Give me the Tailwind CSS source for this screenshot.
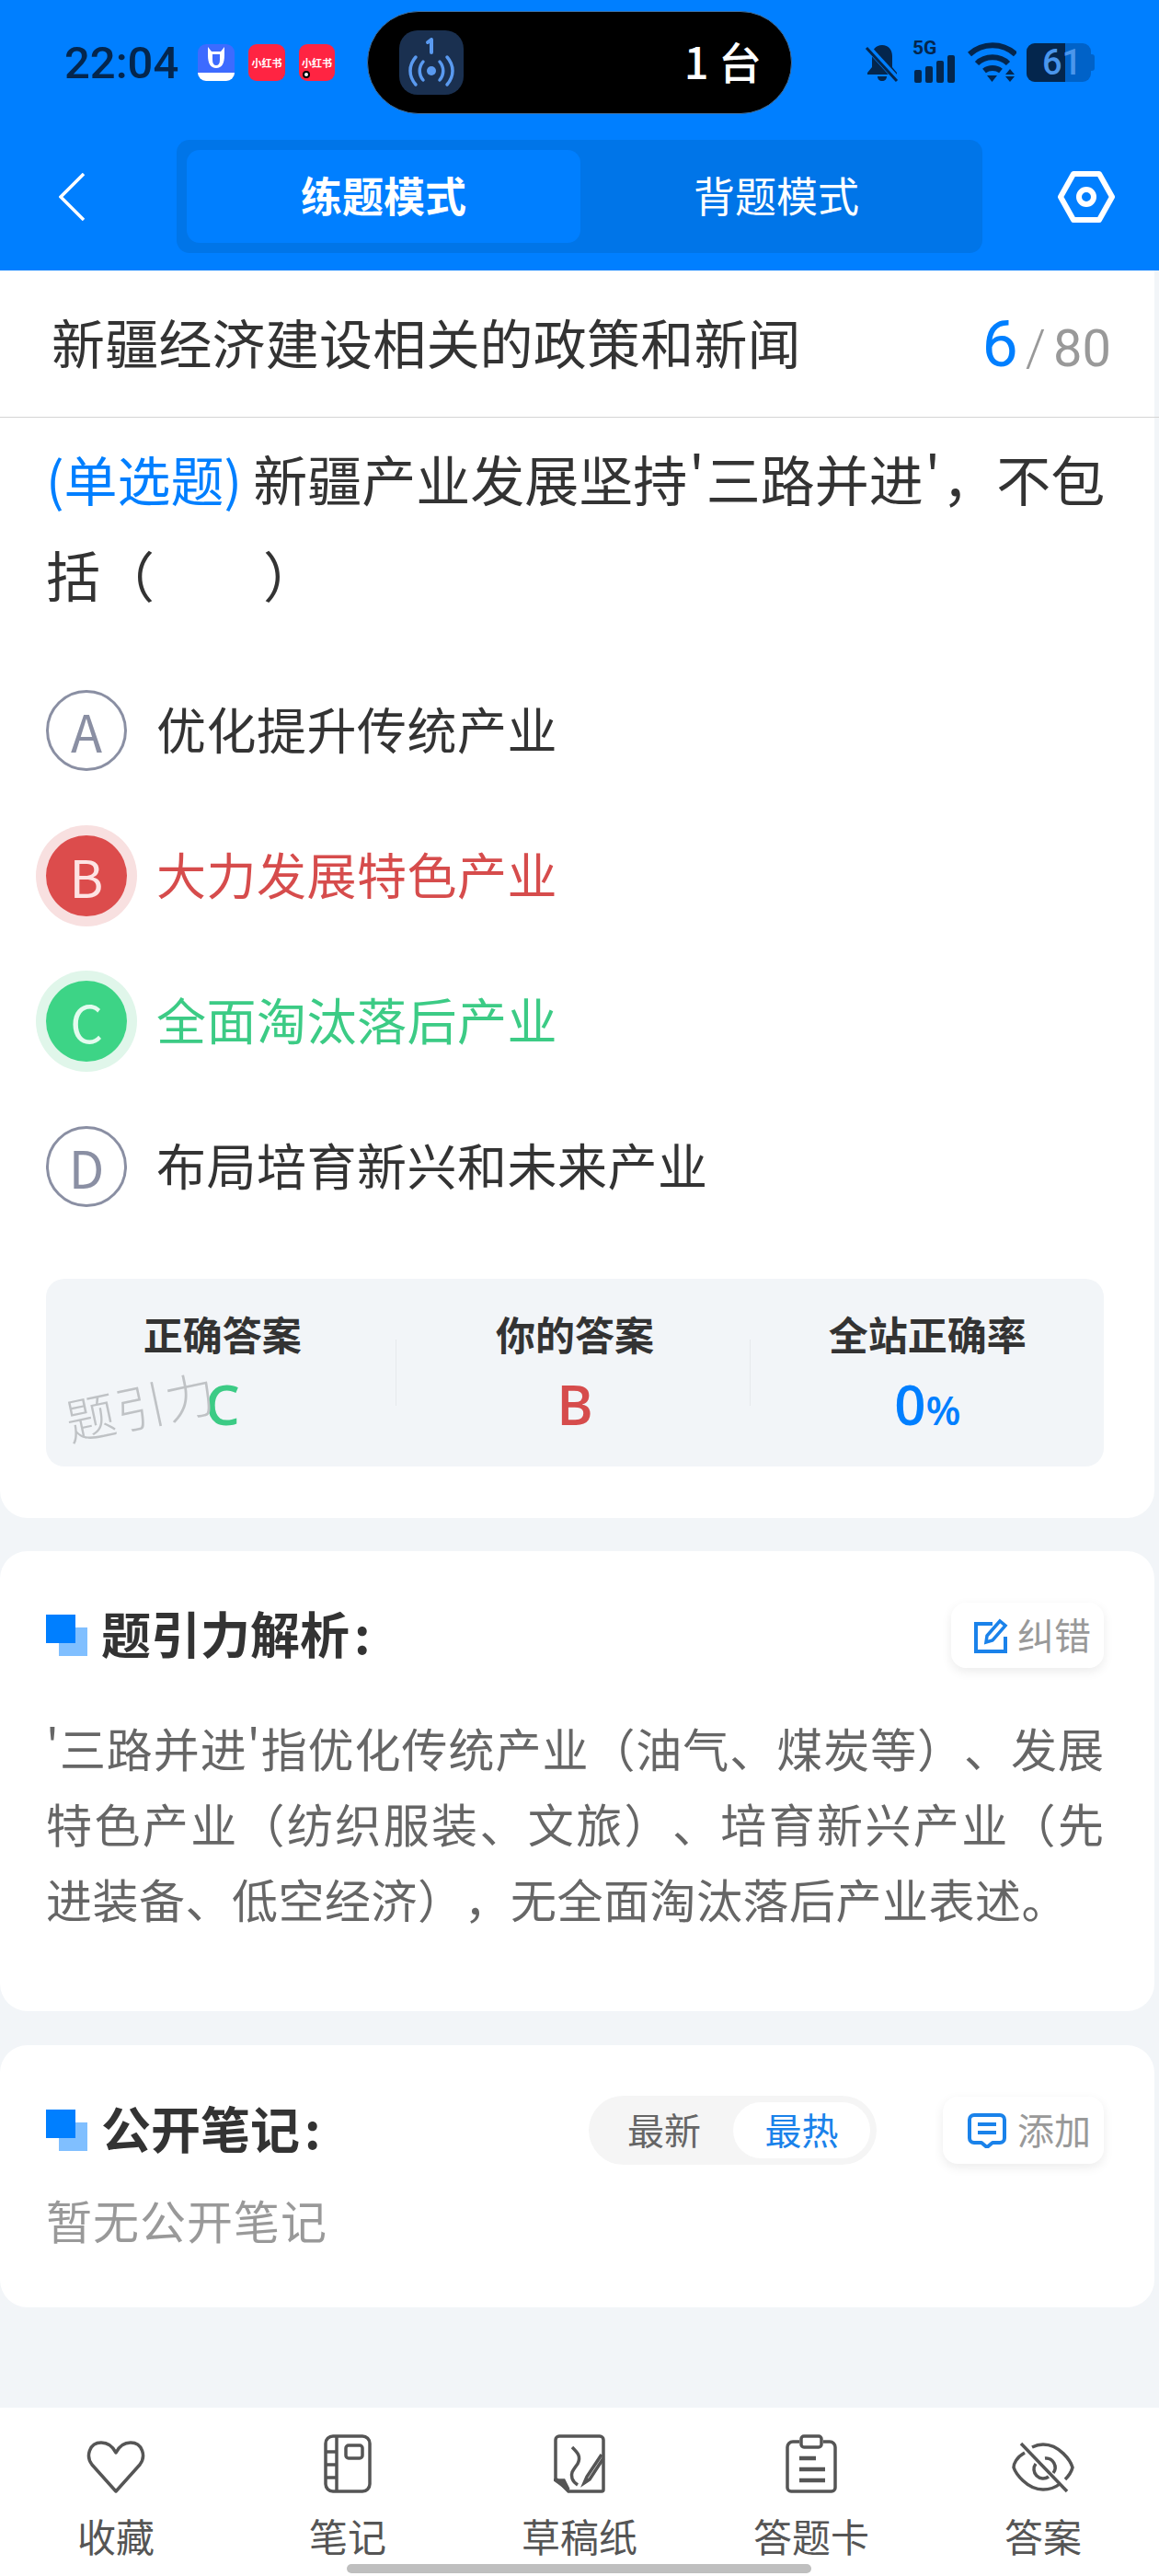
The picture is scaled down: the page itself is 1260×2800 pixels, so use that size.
<!DOCTYPE html>
<html lang="zh-CN">
<head>
    <meta charset="UTF-8">
    <meta name="viewport" content="width=device-width, initial-scale=1.0">
    <title>练题模式</title>
    <script src="https://cdn.jsdelivr.net/npm/@tailwindcss/browser@4"></script>
</head>
<body class="bg-[#f2f5f8]">
    <div class="relative w-[1260px] h-[2800px] flex flex-col overflow-hidden font-['Noto_Sans_CJK_SC','Noto_Sans',sans-serif] text-[#333333]">

        <!-- header -->
        <header class="h-[294px] shrink-0 bg-[#007fff]">
            <div class="h-[136px] pt-[12px] flex items-start">
                <div class="h-[112px] flex items-center pl-[70px] w-[399px] shrink-0">
                    <span class="w-[125px] font-['Roboto',sans-serif] text-[49px] font-medium text-[#04264d] leading-none">22:04</span>
                    <div class="ml-[20px] w-[40px] h-[40px] rounded-[9px] bg-[#3d6bff] overflow-hidden flex flex-col items-center">
                        <svg viewBox="0 0 40 31" class="w-[40px] h-[31px] shrink-0"><path d="M11 3l4 5h10l4-5v9c0 9-3 14-9 14s-9-5-9-14z" fill="#fff"/><path d="M16 11h8v6c0 4-1.5 6-4 6s-4-2-4-6z" fill="#3d6bff"/></svg>
                        <div class="w-[40px] flex-1 bg-white"></div>
                    </div>
                    <div class="ml-[15px] w-[40px] h-[40px] rounded-[9px] bg-[#ff2442] flex items-center justify-center text-white text-[11px] font-bold leading-none whitespace-nowrap">小红书</div>
                    <div class="ml-[15px] relative w-[39px] h-[40px] rounded-[9px] bg-[#ff2442] flex items-center justify-center text-white text-[11px] font-bold leading-none whitespace-nowrap">小红书
                        <span class="absolute left-[4px] bottom-[3px] w-[8px] h-[8px] rounded-full bg-white border-[2px] border-black"></span>
                    </div>
                </div>
                <div class="w-[462px] h-[112px] shrink-0 rounded-full bg-black border border-[#3f6f9f] flex items-center justify-between pl-[34px] pr-[32px]">
                    <div class="w-[70px] h-[70px] rounded-[20px] bg-[#1a3050] flex items-center justify-center">
                        <svg viewBox="0 0 70 70" class="w-[70px] h-[70px]" fill="none" stroke="#5a9af0" stroke-width="3.5" stroke-linecap="round">
                            <path d="M35 10v14M31 13l4-3" stroke-width="4"/>
                            <circle cx="35" cy="44" r="5" fill="#5a9af0" stroke="none"/>
                            <path d="M26 34c-5 6-5 14 0 20M44 34c5 6 5 14 0 20"/>
                            <path d="M18 29c-8 9-8 21 0 30M52 29c8 9 8 21 0 30"/>
                        </svg>
                    </div>
                    <span class="pb-[6px] text-white text-[47px] font-medium leading-none">1 台</span>
                </div>
                <div class="h-[112px] flex items-center pl-[78px]">
                    <svg viewBox="0 0 40 42" class="w-[40px] h-[42px]" fill="#04264d">
                        <path d="M20 2c7 0 11 5 11 12v12l5 6v2H4v-2l5-6V14c0-7 4-12 11-12z"/>
                        <path d="M15 36h10c0 3-2 5-5 5s-5-2-5-5z"/>
                        <path d="M3 3l34 37" stroke="#007fff" stroke-width="7"/>
                        <path d="M3 5l33 36" stroke="#04264d" stroke-width="3"/>
                    </svg>
                    <div class="relative ml-[13px] w-[46px] h-[44px]">
                        <span class="absolute left-0 top-[-4px] text-[21px] font-bold text-[#04264d] leading-none font-['Roboto',sans-serif]">5G</span>
                        <svg viewBox="0 0 46 44" class="w-[46px] h-[44px]" fill="#04264d">
                            <rect x="2" y="30" width="8" height="14" rx="2"/><rect x="14" y="26" width="8" height="18" rx="2"/><rect x="26" y="20" width="8" height="24" rx="2"/><rect x="38" y="14" width="8" height="30" rx="2"/>
                        </svg>
                    </div>
                    <svg viewBox="0 0 53 44" class="ml-[14px] w-[53px] h-[44px]" fill="none" stroke="#04264d" stroke-width="6">
                        <path d="M2 13c14-13 36-13 50 0"/><path d="M10 23c9-9 25-9 34 0"/><path d="M18 31c5-4 13-4 18 0"/>
                        <path d="M21 36h11l-5.5 7z" fill="#04264d" stroke="none"/>
                        <path d="M46 29l5 6H41zM41 37h10l-5 6z" fill="#04264d" stroke="none"/>
                    </svg>
                    <div class="relative ml-[11px] w-[74px] h-[42px] flex items-center">
                        <div class="w-[70px] h-[42px] rounded-[9px] overflow-hidden flex bg-[#0062c8]">
                            <div class="w-[42px] h-[42px] bg-[#04264d]"></div>
                        </div>
                        <div class="w-[4px] h-[18px] rounded-r-[3px] bg-[#0062c8]"></div>
                        <span class="absolute left-[17px] top-0 h-[42px] flex items-center text-[38px] font-medium leading-none text-[#4a96ec] font-['Roboto',sans-serif]">61</span>
                    </div>
                </div>
            </div>
            <div class="flex items-center h-[123px] mt-[16px]">
                <div class="w-[192px] pl-[64px] shrink-0">
                    <svg viewBox="0 0 28 52" class="w-[28px] h-[52px]" fill="none" stroke="#ffffff" stroke-width="3.5"><path d="M27 1L2 26l25 25"/></svg>
                </div>
                <div class="w-[876px] h-[123px] rounded-[14px] bg-[#0075e8] p-[11px] flex shrink-0">
                    <div class="w-[428px] pb-[3px] rounded-[14px] bg-[#007fff] flex items-center justify-center text-white text-[45px] font-bold">练题模式</div>
                    <div class="flex-1 pb-[3px] flex items-center justify-center text-white text-[45px]">背题模式</div>
                </div>
                <div class="pl-[82px]">
                    <svg viewBox="0 0 62 56" class="w-[62px] h-[56px]" fill="none" stroke="#ffffff" stroke-width="6" stroke-linejoin="round"><path d="M17 3h28l14 25-14 25H17L3 28z"/><circle cx="31" cy="28" r="8"/></svg>
                </div>
            </div>
        </header>

        <!-- question card -->
        <section class="w-[1255px] shrink-0 bg-white rounded-b-[30px] pb-[56px]">
            <div class="w-[1260px] h-[160px] border-b border-[#d4d4d4] flex items-center justify-between pl-[56px] pr-[52px]">
                <h1 class="pb-[6px] text-[58px] leading-none tracking-[0.2px] text-[#333333]">新疆经济建设相关的政策和新闻</h1>
                <div class="flex items-baseline font-['Roboto',sans-serif] text-[#999999] text-[56px] leading-none">
                    <span class="text-[#007fff] text-[70px]">6</span><span class="mx-[8px] font-light">/</span><span>80</span>
                </div>
            </div>
            <p class="w-[1160px] ml-[50px] pt-[14px] pb-[3px] text-[59px] leading-[104px] text-[#333333]"><span class="whitespace-nowrap"><span class="mr-[12px] text-[58px] text-[#007fff]">(单选题)</span>新疆产业发展坚持<span class="px-[2px]">'</span>三路并进<span class="px-[2px]">'</span>，不包</span><br>括（　　）</p>
            <ul class="mt-[36px] ml-[50px]">
                <li class="h-[158px] flex items-center gap-[32px]">
                    <span class="w-[88px] h-[88px] rounded-full border-[3px] border-[#8a8fa3] text-[#8a8fa3] text-[56px] flex items-center justify-center">A</span>
                    <span class="pb-[6px] text-[54px] tracking-[0.5px]">优化提升传统产业</span>
                </li>
                <li class="h-[158px] flex items-center gap-[32px]">
                    <span class="w-[88px] h-[88px] rounded-full bg-[#dc4c4c] ring-[11px] ring-[#f8e0e0] text-[#fde4e4] text-[56px] flex items-center justify-center">B</span>
                    <span class="pb-[6px] text-[54px] tracking-[0.5px] text-[#d64c4c]">大力发展特色产业</span>
                </li>
                <li class="h-[158px] flex items-center gap-[32px]">
                    <span class="w-[88px] h-[88px] rounded-full bg-[#3dd486] ring-[11px] ring-[#e0f6ea] text-[#e4fbef] text-[56px] flex items-center justify-center">C</span>
                    <span class="pb-[6px] text-[54px] tracking-[0.5px] text-[#3ccb85]">全面淘汰落后产业</span>
                </li>
                <li class="h-[158px] flex items-center gap-[32px]">
                    <span class="w-[88px] h-[88px] rounded-full border-[3px] border-[#8a8fa3] text-[#8a8fa3] text-[56px] flex items-center justify-center">D</span>
                    <span class="pb-[6px] text-[54px] tracking-[0.5px]">布局培育新兴和未来产业</span>
                </li>
            </ul>
            <div class="relative mt-[43px] ml-[50px] w-[1150px] h-[204px] rounded-[20px] bg-[#f2f5f8] grid grid-cols-3 pt-[29px]">
                <div class="flex flex-col items-center">
                    <span class="text-[43px] leading-[60px] font-bold">正确答案</span>
                    <span class="mt-[12px] text-[60px] leading-[70px] font-semibold text-[#3ccb85] font-['Open_Sans',sans-serif]">C</span>
                </div>
                <div class="flex flex-col items-center">
                    <span class="text-[43px] leading-[60px] font-bold">你的答案</span>
                    <span class="mt-[12px] text-[60px] leading-[70px] font-semibold text-[#d64c4c] font-['Open_Sans',sans-serif]">B</span>
                </div>
                <div class="flex flex-col items-center">
                    <span class="text-[43px] leading-[60px] font-bold">全站正确率</span>
                    <span class="mt-[12px] text-[60px] leading-[70px] font-semibold text-[#007fff] font-['Open_Sans',sans-serif]">0<span class="text-[44px]">%</span></span>
                </div>
                <div class="absolute left-[380px] top-[66px] w-px h-[72px] bg-[#e6e9ec]"></div>
                <div class="absolute left-[765px] top-[66px] w-px h-[72px] bg-[#e6e9ec]"></div>
                <span class="absolute left-[20px] top-[110px] -rotate-[12deg] text-[54px] leading-none font-light text-[#bfc2c5] tracking-[1px]">题引力</span>
            </div>
        </section>

        <!-- analysis -->
        <section class="w-[1255px] shrink-0 mt-[36px] bg-white rounded-[30px] pt-[56px] pb-[82px] px-[50px]">
            <div class="flex items-center justify-between w-[1150px] h-[71px]">
                <div class="flex items-center">
                    <span class="relative w-[45px] h-[46px]">
                        <i class="absolute left-[14px] top-[14px] w-[31px] h-[31px] bg-[#80bfff]"></i>
                        <i class="absolute left-0 top-0 w-[32px] h-[31px] bg-[#007fff]"></i>
                    </span>
                    <h2 class="ml-[15px] pb-[5px] text-[54px] leading-none font-bold">题引力解析<span class="ml-[5px]">:</span></h2>
                </div>
                <button class="w-[166px] h-[71px] rounded-[16px] bg-white shadow-[0_4px_12px_rgba(0,0,0,0.08)] flex items-center justify-end gap-[9px] pr-[14px] text-[40px] text-[#999999]">
                    <svg viewBox="0 0 38 38" class="w-[38px] h-[38px]" fill="none" stroke="#1a82ea" stroke-width="4"><path d="M20 6H2v30h32V20"/><path d="M14 19L28 3l6 5-14 16-7 2z" stroke-width="3.5"/></svg>
                    <span class="pb-[4px]">纠错</span>
                </button>
            </div>
            <p class="mt-[45px] w-[1150px] text-[50px] leading-[82px] text-[#666666] [text-spacing-trim:space-all]">
                <span class="block text-justify [text-align-last:justify]">'三路并进'指优化传统产业（油气、煤炭等）、发展</span>
                <span class="block text-justify [text-align-last:justify]">特色产业（纺织服装、文旅）、培育新兴产业（先</span>
                <span class="block tracking-[0.5px]">进装备、低空经济），无全面淘汰落后产业表述。</span>
            </p>
        </section>

        <!-- notes -->
        <section class="w-[1255px] shrink-0 mt-[37px] bg-white rounded-[30px] pt-[55px] pb-[61px] px-[50px]">
            <div class="flex items-center w-[1150px] h-[75px]">
                <span class="relative w-[45px] h-[46px]">
                    <i class="absolute left-[14px] top-[14px] w-[31px] h-[31px] bg-[#80bfff]"></i>
                    <i class="absolute left-0 top-0 w-[32px] h-[31px] bg-[#007fff]"></i>
                </span>
                <h2 class="ml-[15px] pb-[5px] text-[54px] leading-none font-bold">公开笔记<span class="ml-[5px]">:</span></h2>
                <div class="ml-auto w-[313px] h-[75px] rounded-full bg-[#f5f5f5] flex items-center p-[7px] text-[40px]">
                    <span class="flex-1 pb-[3px] text-center text-[#666666]">最新</span>
                    <span class="w-[149px] h-[61px] pb-[3px] rounded-full bg-white text-[#1a82ea] flex items-center justify-center">最热</span>
                </div>
                <button class="ml-[72px] w-[175px] h-[73px] rounded-[16px] bg-white shadow-[0_4px_12px_rgba(0,0,0,0.08)] flex items-center justify-end gap-[12px] pr-[14px] text-[40px] text-[#999999]">
                    <svg viewBox="0 0 42 38" class="w-[42px] h-[38px]" fill="none" stroke="#1a82ea" stroke-width="4" stroke-linejoin="round"><path d="M7 2h28a5 5 0 015 5v20a5 5 0 01-5 5h-8l-6 5-6-5H7a5 5 0 01-5-5V7a5 5 0 015-5z"/><path d="M11 12h20M11 21h20"/></svg>
                    <span class="pb-[4px]">添加</span>
                </button>
            </div>
            <p class="mt-[24px] text-[50px] leading-[70px] text-[#999999] tracking-[1px]">暂无公开笔记</p>
        </section>

        <div class="flex-1"></div>

        <!-- footer -->
        <footer class="h-[183px] shrink-0 bg-white grid grid-cols-5 text-[42px] text-[#555555]">
            <div class="flex flex-col items-center">
                <div class="h-[111px] flex items-end justify-center pb-[18px]">
                    <svg viewBox="0 0 64 58" class="w-[64px] h-[58px]" fill="none" stroke="#555555" stroke-width="3.5" stroke-linejoin="round"><path d="M32 56L6 27C-1 18 3 3 16 3c8 0 13 5 16 11 3-6 8-11 16-11 13 0 17 15 10 24z"/></svg>
                </div>
                <span class="leading-[56px]">收藏</span>
            </div>
            <div class="flex flex-col items-center">
                <div class="h-[111px] flex items-end justify-center pb-[18px]">
                    <svg viewBox="0 0 52 64" class="w-[52px] h-[64px]" fill="none" stroke="#555555" stroke-width="3.5"><rect x="2" y="2" width="48" height="60" rx="8"/><path d="M14 2v60M2 19h12M2 33h12M2 47h12"/><rect x="24" y="12" width="18" height="14" rx="3"/></svg>
                </div>
                <span class="leading-[56px]">笔记</span>
            </div>
            <div class="flex flex-col items-center">
                <div class="h-[111px] flex items-end justify-center pb-[18px]">
                    <svg viewBox="0 0 56 64" class="w-[56px] h-[64px]" fill="none" stroke="#555555" stroke-width="3.5"><path d="M6 2h44a4 4 0 014 4v54a2 2 0 01-2 2H16L2 48V6a4 4 0 014-4z"/><path d="M2 50h9l5 10z" fill="#555555"/><path d="M20 14c6 6 10 10 6 18-5 7-8 10-6 16 1 3 3 5 6 7"/><path d="M52 22L36 46l-3 7 6-4 15-23"/></svg>
                </div>
                <span class="leading-[56px]">草稿纸</span>
            </div>
            <div class="flex flex-col items-center">
                <div class="h-[111px] flex items-end justify-center pb-[18px]">
                    <svg viewBox="0 0 56 64" class="w-[56px] h-[64px]" fill="none" stroke="#555555" stroke-width="3.5"><path d="M15 8H8a6 6 0 00-6 6v44a4 4 0 004 4h44a4 4 0 004-4V14a6 6 0 00-6-6h-7"/><rect x="17" y="2" width="22" height="12" rx="3"/><path d="M15 26h18M15 38h28M15 50h28" stroke-width="4.5"/></svg>
                </div>
                <span class="leading-[56px]">答题卡</span>
            </div>
            <div class="flex flex-col items-center">
                <div class="h-[111px] flex items-end justify-center pb-[18px]">
                    <svg viewBox="0 0 68 56" class="w-[68px] h-[56px]" fill="none" stroke="#555555" stroke-width="3.5"><path d="M14 12C5 17 2 24 2 28c2 6 14 24 32 24 7 0 13-2 18-6"/><path d="M22 6c4-2 8-3 12-3 18 0 30 18 32 25-1 4-4 9-8 13"/><path d="M36 18a10 10 0 019 16M26 24a10 10 0 0014 14"/><path d="M10 2l50 52"/></svg>
                </div>
                <span class="leading-[56px]">答案</span>
            </div>
        </footer>
        <div class="absolute left-[377px] top-[2787px] w-[505px] h-[10px] rounded-full bg-[#bfbfbf]"></div>
    </div>
</body>
</html>
